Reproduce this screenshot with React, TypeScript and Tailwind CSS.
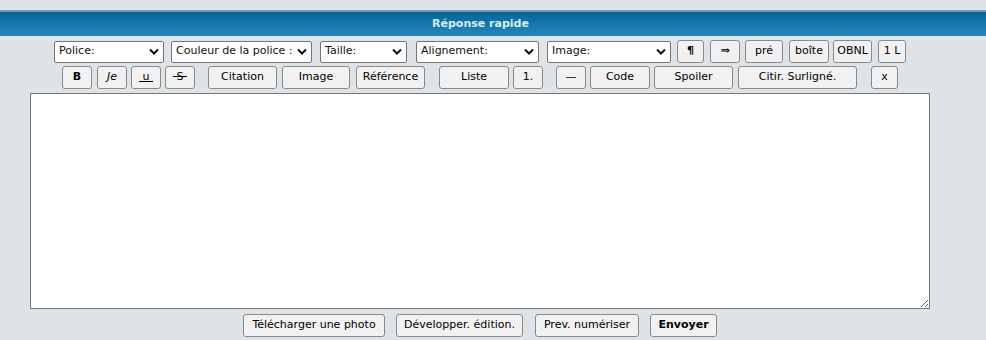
import React from 'react';

const font = { fontFamily: '"DejaVu Sans", Verdana, sans-serif' };

const Chevron: React.FC = () => (
  <svg width="10" height="7" viewBox="0 0 10 7" className="shrink-0">
    <polyline points="1,1.5 5,5.5 9,1.5" fill="none" stroke="#111" strokeWidth="2" />
  </svg>
);

const FakeSelect: React.FC<{ label: string; w: string; ml: string }> = ({ label, w, ml }) => (
  <div
    className={`${w} ${ml} h-[22px] flex items-center justify-between pl-[4px] pr-[4px] bg-white border border-[#767676] rounded-[2px] text-[11px] text-[#111] overflow-hidden whitespace-nowrap`}
  >
    <span className="truncate">{label}</span>
    <Chevron />
  </div>
);

const Btn: React.FC<{ w: string; ml?: string; className?: string; children: React.ReactNode }> = ({
  w,
  ml = '',
  className = '',
  children,
}) => (
  <button
    type="button"
    className={`${w} ${ml} h-[23px] shrink-0 flex items-center justify-center bg-[#f1f1f1] border border-[#8a8a8a] rounded-[3px] text-[11px] text-black whitespace-nowrap ${className}`}
    style={font}
  >
    {children}
  </button>
);

const App: React.FC = () => {
  return (
    <div className="w-[986px] h-[340px] bg-[#dee3e7] pt-[10px] overflow-hidden" style={font}>
      {/* Header */}
      <div className="border-t-2 border-[#7d97aa] h-[26px] bg-gradient-to-b from-[#03649a] to-[#2389b9]">
        <div className="w-[961px] h-[24px] flex items-center justify-center">
          <span className="text-[11px] font-bold text-[#dcecf4]">Réponse rapide</span>
        </div>
      </div>

      <div className="w-[960px] flex flex-col items-center">
        {/* Row 1 */}
        <div className="mt-[4px] h-[23px] flex items-center">
          <FakeSelect label="Police:" w="w-[110px]" ml="" />
          <FakeSelect label="Couleur de la police :" w="w-[141px]" ml="ml-[7px]" />
          <FakeSelect label="Taille:" w="w-[87px]" ml="ml-[8px]" />
          <FakeSelect label="Alignement:" w="w-[123px]" ml="ml-[9px]" />
          <FakeSelect label="Image:" w="w-[124px]" ml="ml-[8px]" />
          <Btn w="w-[27px]" ml="ml-[6px]" className="font-bold text-[#4a2a00]">¶</Btn>
          <Btn w="w-[30px]" ml="ml-[6px]">⇛</Btn>
          <Btn w="w-[38px]" ml="ml-[5px]">pré</Btn>
          <Btn w="w-[40px]" ml="ml-[6px]">boîte</Btn>
          <Btn w="w-[39px]" ml="ml-[4px]">OBNL</Btn>
          <Btn w="w-[28px]" ml="ml-[6px]">1 L</Btn>
        </div>

        {/* Row 2 */}
        <div className="mt-[3px] h-[23px] flex items-center">
          <Btn w="w-[30px]" className="font-bold">B</Btn>
          <Btn w="w-[30px]" ml="ml-[5px]" className="italic">Je</Btn>
          <Btn w="w-[30px]" ml="ml-[4px]">
            <span className="underline">&nbsp;u&nbsp;</span>
          </Btn>
          <Btn w="w-[30px]" ml="ml-[4px]">
            <span className="line-through">&nbsp;S&nbsp;</span>
          </Btn>
          <Btn w="w-[69px]" ml="ml-[13px]">Citation</Btn>
          <Btn w="w-[68px]" ml="ml-[5px]">Image</Btn>
          <Btn w="w-[69px]" ml="ml-[6px]">Référence</Btn>
          <Btn w="w-[70px]" ml="ml-[14px]">Liste</Btn>
          <Btn w="w-[30px]" ml="ml-[4px]">1.</Btn>
          <Btn w="w-[30px]" ml="ml-[13px]">—</Btn>
          <Btn w="w-[60px]" ml="ml-[4px]">Code</Btn>
          <Btn w="w-[79px]" ml="ml-[4px]">Spoiler</Btn>
          <Btn w="w-[119px]" ml="ml-[5px]">Citir. Surligné.</Btn>
          <Btn w="w-[27px]" ml="ml-[14px]">x</Btn>
        </div>

        {/* Textarea */}
        <textarea
          className="mt-[4px] w-[900px] h-[216px] bg-white border border-[#767676] rounded-none outline-none resize p-1 text-[11px]"
          style={font}
        />

        {/* Bottom buttons */}
        <div className="mt-[5px] h-[23px] flex items-center">
          <Btn w="w-[142px]">Télécharger une photo</Btn>
          <Btn w="w-[127px]" ml="ml-[11px]">Développer. édition.</Btn>
          <Btn w="w-[104px]" ml="ml-[12px]">Prev. numériser</Btn>
          <Btn w="w-[67px]" ml="ml-[11px]" className="font-bold">Envoyer</Btn>
        </div>
      </div>
    </div>
  );
};

export default App;
